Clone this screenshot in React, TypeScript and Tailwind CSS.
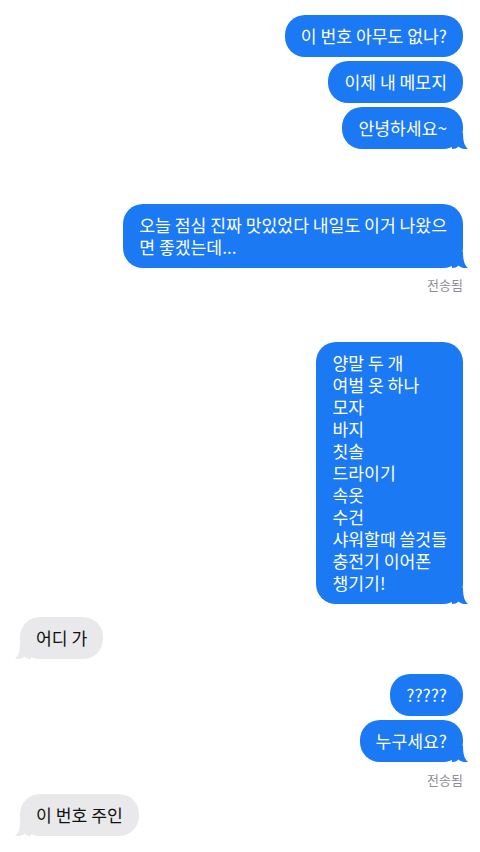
type Msg = {
  side: "me" | "them";
  text: string[];
  tail?: boolean;
  mt: string;
};

const font = { fontFamily: '"Noto Sans CJK KR", "Noto Sans", sans-serif' };

const Tail = ({ side, color }: { side: "me" | "them"; color: string }) => (
  <svg
    viewBox="0 0 16 16"
    className={
      side === "me"
        ? "absolute -right-[5px] bottom-0 h-4 w-4"
        : "absolute -left-[5px] bottom-0 h-4 w-4 -scale-x-100"
    }
  >
    <path
      d="M0 0 H11 C11 8 12.5 13 16 16 C12 16.5 8.5 15.5 6.5 13.5 C5 15.2 3 16 0 16 Z"
      fill={color}
    />
  </svg>
);

const Bubble = ({ msg }: { msg: Msg }) => {
  const me = msg.side === "me";
  return (
    <div className={`flex ${me ? "justify-end" : "justify-start"} ${msg.mt}`}>
      <div
        className={`relative rounded-[20px] px-4 py-[10px] text-[17.2px] leading-[22px] ${
          me ? "bg-[#1a79f3] text-white" : "bg-[#e9e9eb] text-[#111]"
        }`}
      >
        {msg.text.map((line, i) => (
          <div key={i} className="whitespace-nowrap">
            {line}
          </div>
        ))}
        {msg.tail && <Tail side={msg.side} color={me ? "#1a79f3" : "#e9e9eb"} />}
      </div>
    </div>
  );
};

const Sent = ({ mt }: { mt: string }) => (
  <div className={`flex justify-end ${mt} text-[13px] leading-4 text-[#8e8e93]`}>전송됨</div>
);

export default function App() {
  return (
    <div className="min-h-[852px] w-[480px] bg-white pl-5 pr-[17px] pt-[15px]" style={font}>
      <Bubble msg={{ side: "me", text: ["이 번호 아무도 없나?"], mt: "mt-0" }} />
      <Bubble msg={{ side: "me", text: ["이제 내 메모지"], mt: "mt-[4px]" }} />
      <Bubble msg={{ side: "me", text: ["안녕하세요~"], tail: true, mt: "mt-[4px]" }} />
      <Bubble
        msg={{
          side: "me",
          text: ["오늘 점심 진짜 맛있었다 내일도 이거 나왔으", "면 좋겠는데..."],
          tail: true,
          mt: "mt-[55px]",
        }}
      />
      <Sent mt="mt-[9px]" />
      <Bubble
        msg={{
          side: "me",
          text: [
            "양말 두 개",
            "여벌 옷 하나",
            "모자",
            "바지",
            "칫솔",
            "드라이기",
            "속옷",
            "수건",
            "샤워할때 쓸것들",
            "충전기 이어폰",
            "챙기기!",
          ],
          tail: true,
          mt: "mt-[49px]",
        }}
      />
      <Bubble msg={{ side: "them", text: ["어디 가"], tail: true, mt: "mt-[13px]" }} />
      <Bubble msg={{ side: "me", text: ["?????"], mt: "mt-[15px]" }} />
      <Bubble msg={{ side: "me", text: ["누구세요?"], tail: true, mt: "mt-[4px]" }} />
      <Sent mt="mt-[10px]" />
      <Bubble msg={{ side: "them", text: ["이 번호 주인"], tail: true, mt: "mt-[6px]" }} />
    </div>
  );
}
